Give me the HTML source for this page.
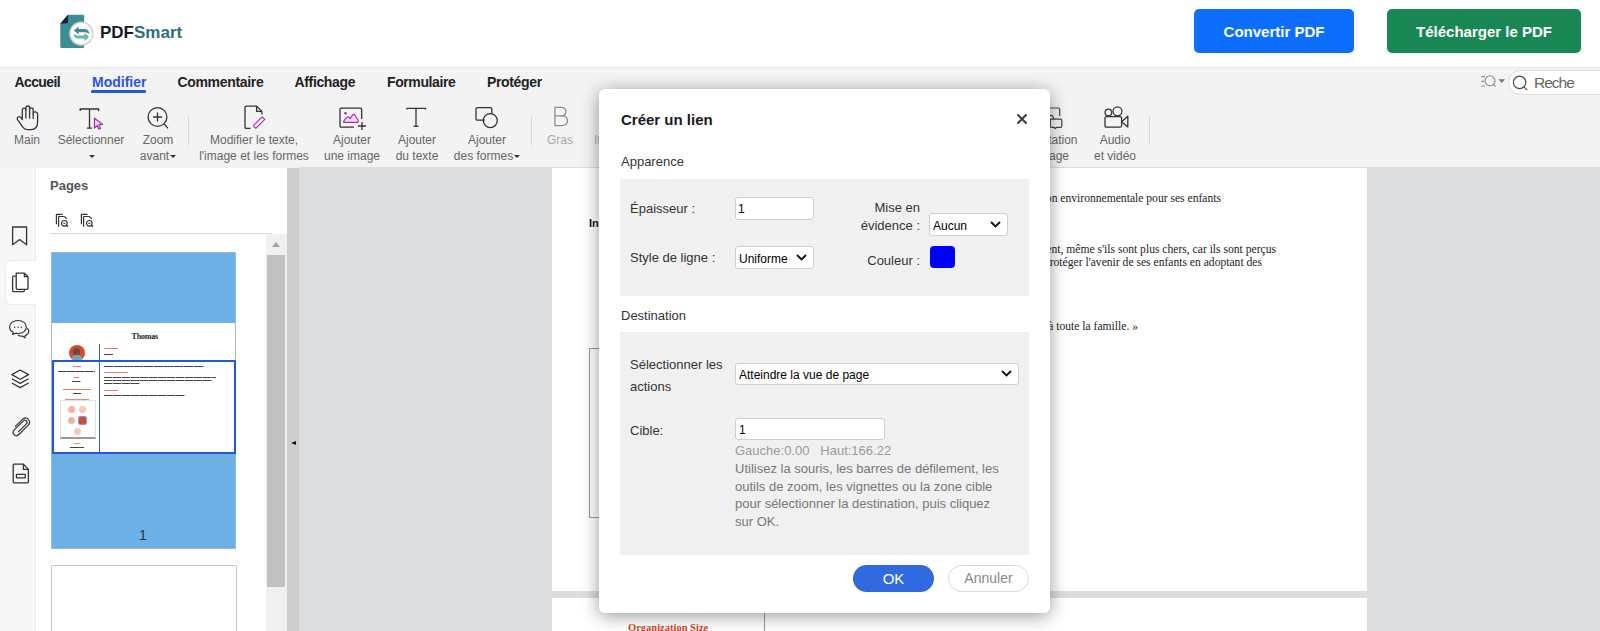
<!DOCTYPE html>
<html><head><meta charset="utf-8">
<style>
*{margin:0;padding:0;box-sizing:border-box}
html,body{width:1600px;height:631px;overflow:hidden;background:#fff;font-family:"Liberation Sans",sans-serif}
.a{position:absolute}
.t{position:absolute;white-space:nowrap;line-height:1}
#hdr{left:0;top:0;width:1600px;height:68px;background:#fff;border-bottom:1px solid #e6e6e6}
.btn{position:absolute;top:9px;height:44px;border-radius:5px;color:#fff;font-weight:bold;font-size:15px;text-align:center;line-height:45.5px}
#tb{left:0;top:68px;width:1600px;height:100px;background:#f3f3f3}
.tab{position:absolute;top:73.5px;font-weight:bold;font-size:14px;color:#222;line-height:16px}
.lbl{position:absolute;font-size:12px;color:#666;text-align:center;line-height:15.5px;white-space:nowrap}
.sep{position:absolute;top:116px;width:1px;height:29px;background:#d6d6d6}
.caret{display:inline-block;width:0;height:0;border-left:3px solid transparent;border-right:3px solid transparent;border-top:3px solid #333;vertical-align:middle;margin-left:1px}
#rail{left:0;top:168px;width:36px;height:463px;background:#f7f7f7}
#panel{left:36px;top:168px;width:251px;height:463px;background:#fff}
#split{left:287px;top:168px;width:12px;height:463px;background:#cdcdcd}
#work{left:299px;top:167px;width:1301px;height:464px;background:#dcdddf}
.page{position:absolute;background:#fff}
.serif{font-family:"Liberation Serif",serif}
#modal{left:599px;top:89px;width:451px;height:524px;background:#fff;border-radius:6px;box-shadow:0 3px 18px rgba(0,0,0,.4)}
.sec{position:absolute;background:#f0f0f0}
.ml{position:absolute;font-size:13px;color:#333;white-space:nowrap;line-height:1}
.inp{position:absolute;background:#fff;border:1px solid #cfcfcf;border-radius:3px}
.chev{position:absolute}
</style></head><body>

<!-- HEADER -->
<div id="hdr" class="a">
  <svg class="a" style="left:56px;top:10px" width="42" height="44" viewBox="0 0 42 44">
    <path d="M4.3 13.4 L12 4.8 H26.7 a1.5 1.5 0 0 1 1.5 1.5 V36.6 a1.5 1.5 0 0 1 -1.5 1.5 H5.8 a1.5 1.5 0 0 1 -1.5 -1.5 Z" fill="#3b8e93"/>
    <path d="M4.3 13.4 L12 4.8 V11.6 a1.8 1.8 0 0 1 -1.8 1.8 Z" fill="#1c2433"/>
    <circle cx="25.4" cy="23.6" r="12.2" fill="#d3d3d3"/>
    <circle cx="25.4" cy="23.6" r="10.6" fill="#fff"/>
    <path d="M17.8 20.6 L22.6 16.6 V19 H29 Q33.2 19.4 33.2 24.2 Q31.6 22.2 29 22.2 H22.6 V24.6 Z" fill="#3b8e93"/>
    <path d="M33.2 27 L28.4 31 V28.6 H22 Q17.8 28.2 17.8 23.4 Q19.4 25.4 22 25.4 H28.4 V23 Z" fill="#6bb3b0"/>
  </svg>
  <div class="t" style="left:100px;top:24px;font-size:17px;font-weight:bold;color:#141a26">PDF<span style="color:#2c6f78">Smart</span></div>
  <div class="btn" style="left:1194px;width:160px;background:#0d6efd">Convertir PDF</div>
  <div class="btn" style="left:1387px;width:194px;background:#198754">Télécharger le PDF</div>
</div>

<!-- TOOLBAR -->
<div id="tb" class="a"></div>
<div class="tab" style="left:14.5px;letter-spacing:-0.62px">Accueil</div>
<div class="tab" style="left:92px;color:#2a55e0">Modifier</div>
<div class="a" style="left:91px;top:90px;width:55px;height:3px;background:#2a55e0;border-radius:1px"></div>
<div class="tab" style="left:177.5px;letter-spacing:-0.33px">Commentaire</div>
<div class="tab" style="left:294.5px;letter-spacing:-0.35px">Affichage</div>
<div class="tab" style="left:387px;letter-spacing:-0.4px">Formulaire</div>
<div class="tab" style="left:487px;letter-spacing:-0.35px">Protéger</div>

<div class="lbl" style="left:-3px;width:60px;top:133px">Main</div>
<div class="lbl" style="left:51px;width:80px;top:133px">Sélectionner<br><span class="caret"></span></div>
<div class="lbl" style="left:128px;width:60px;top:133px">Zoom<br>avant<span class="caret"></span></div>
<div class="sep" style="left:188px"></div>
<div class="lbl" style="left:194px;width:120px;top:133px">Modifier le texte,<br>l'image et les formes</div>
<div class="lbl" style="left:316px;width:72px;top:133px">Ajouter<br>une image</div>
<div class="lbl" style="left:386px;width:62px;top:133px">Ajouter<br>du texte</div>
<div class="lbl" style="left:447px;width:80px;top:133px">Ajouter<br>des formes<span class="caret"></span></div>
<div class="sep" style="left:531px"></div>
<div class="lbl" style="left:540px;width:40px;top:133px;color:#aaa">Gras</div>
<div class="lbl" style="left:594px;width:40px;top:133px;color:#aaa;text-align:left">Italique</div>
<div class="lbl" style="left:997.5px;width:80px;top:133px;text-align:right">Annotation</div><div class="lbl" style="left:989px;width:80px;top:148.5px;text-align:right">d'image</div>
<div class="lbl" style="left:1085px;width:60px;top:133px">Audio<br>et vidéo</div>
<div class="sep" style="left:1149px"></div>

<!-- search -->
<div class="a" style="left:1508px;top:70px;width:110px;height:25px;background:#fff;border:1px solid #dcdcdc;border-radius:13px"></div>
<div class="t" style="left:1534px;top:75px;font-size:15.5px;color:#666;letter-spacing:-1px">Reche</div>


<!-- toolbar icons -->
<svg class="a" style="left:16px;top:105px" width="24" height="26" viewBox="0 0 24 26" fill="none" stroke="#333" stroke-width="1.3" stroke-linejoin="round" stroke-linecap="round">
  <path d="M6.3 14 V5 Q6.3 3.1 8.1 3.1 Q9.9 3.1 9.9 5 V2.8 Q9.9 1 11.7 1 Q13.6 1 13.6 2.8 V4.6 Q13.6 2.8 15.4 2.8 Q17.2 2.8 17.2 4.6 V8.6 Q17.2 6.9 19.1 6.9 Q21.3 6.9 21.6 8.9 V17 Q21.6 24.6 15 24.6 H11.4 Q8.6 24.6 7 22.4 L1.5 14.6 Q0.7 13 2.1 12 Q3.6 11.2 4.9 12.6 L6.3 14.6"/>
  <path d="M9.9 5 V13 M13.6 4.6 V13 M17.2 8.6 V13.6"/>
</svg>
<svg class="a" style="left:79px;top:107px" width="26" height="24" viewBox="0 0 26 24" fill="none" stroke="#333" stroke-width="1.3">
  <path d="M1.2 4 V2 H19.6 V4 M10.5 2 V21.2 M8 21.2 H13"/>
  <path d="M15.5 11.2 L23.4 17.3 L19.7 17.9 L21.5 21.4 L19.9 22.2 L18.1 18.7 L15.5 21 Z" fill="#f6d8f8" stroke="#a02fb0" stroke-width="1.2" stroke-linejoin="round"/>
</svg>
<svg class="a" style="left:145px;top:105px" width="26" height="26" viewBox="0 0 26 26" fill="none" stroke="#333" stroke-width="1.3">
  <circle cx="12.5" cy="12" r="9.4"/>
  <path d="M8 12 H17 M12.5 7.6 V16.4 M19.2 18.8 L23 23.4"/>
</svg>
<svg class="a" style="left:243px;top:105px" width="24" height="25" viewBox="0 0 24 25" fill="none" stroke="#333" stroke-width="1.3" stroke-linejoin="round">
  <path d="M7.5 23.3 H3.5 Q2 23.3 2 21.8 V2.6 Q2 1.1 3.5 1.1 H13.6 L18.9 6.4 V9.6"/>
  <path d="M13.6 1.1 V6.4 H18.9"/>
  <path d="M10.4 22.6 L19.2 13.8 L21.8 16.4 L13 25.2 Q11.2 24.6 10.4 22.6 Z" stroke="#a02fb0" stroke-width="1.2" transform="translate(0,-2)"/>
</svg>
<svg class="a" style="left:338px;top:106px" width="30" height="25" viewBox="0 0 30 25" fill="none" stroke="#333" stroke-width="1.3" stroke-linejoin="round">
  <path d="M16 21.2 H3.5 Q2 21.2 2 19.7 V3.6 Q2 2.1 3.5 2.1 H22.2 Q23.7 2.1 23.7 3.6 V13"/>
  <path d="M24 16 V24 M20 20 H28"/>
  <path d="M5.6 15.6 Q6 14.4 7 13.3 L9 11.3 Q10 10.4 11 11.4 L12.2 12.6 L14.5 9 Q15.6 7.6 16.8 9 L20 14 Q20.8 16.4 19 16.4 H6.8 Q5.3 16.4 5.6 15.6 Z" fill="#f6d8f8" stroke="#a02fb0" stroke-width="1.2"/>
  <circle cx="7.5" cy="7.3" r="1.3" fill="#a02fb0" stroke="none"/>
</svg>
<svg class="a" style="left:405px;top:106px" width="22" height="23" viewBox="0 0 22 23" fill="none" stroke="#333" stroke-width="1.3">
  <path d="M2 3.5 V2.3 H20.6 V3.5 M11 2.3 V20.4 M8.5 20.4 H13.5"/>
</svg>
<svg class="a" style="left:474px;top:106px" width="26" height="24" viewBox="0 0 26 24" fill="none" stroke="#333" stroke-width="1.3">
  <path d="M10.8 14.2 H3.5 Q2 14.2 2 12.7 V3.1 Q2 1.6 3.5 1.6 H16.3 Q17.8 1.6 17.8 3.1 V7.4"/>
  <circle cx="16.3" cy="14.6" r="7"/>
</svg>
<svg class="a" style="left:552px;top:106px" width="18" height="22" viewBox="0 0 18 22" fill="none" stroke="#8c8c8c" stroke-width="1.3">
  <path d="M2.9 1.4 H9 Q13.9 1.4 13.9 5.4 Q13.9 9.8 9 9.8 H2.9 Z M2.9 9.8 H10 Q15.5 9.8 15.5 14.8 Q15.5 19.6 9.5 19.6 H2.9 Z"/>
</svg>
<svg class="a" style="left:1048px;top:106px" width="16" height="24" viewBox="0 0 16 24" fill="none" stroke="#444" stroke-width="1.2" stroke-linejoin="round">
  <path d="M-4 2 H10.2 Q11.7 2 11.7 3.5 V10"/>
  <path d="M2.3 13.2 H12.5 Q13.8 13.2 13.8 14.5 V20 Q13.8 21.3 12.5 21.3 H8.7 L7 22.7 L6.4 21.3 H3.6 Q2.3 21.3 2.3 20 Z"/>
  <path d="M2 9.6 Q5 8.6 5.6 12.9"/>
</svg>
<svg class="a" style="left:1102px;top:104px" width="28" height="25" viewBox="0 0 28 25" fill="none" stroke="#333" stroke-width="1.3" stroke-linejoin="round">
  <circle cx="6.4" cy="8.5" r="3.3"/>
  <circle cx="15.5" cy="7.3" r="4.5"/>
  <path d="M4.5 12.6 H18.1 Q19.6 12.6 19.6 14.1 V21.7 Q19.6 23.2 18.1 23.2 H4.5 Q3 23.2 3 21.7 V14.1 Q3 12.6 4.5 12.6 Z"/>
  <path d="M19.6 17.8 L25.8 12.3 V23 Z"/>
</svg>
<!-- search tool icon -->
<svg class="a" style="left:1480px;top:74px" width="28" height="16" viewBox="0 0 28 16" fill="none" stroke="#8a8a8a" stroke-width="1.1">
  <path d="M1.2 2.6 H5 M1.2 7.3 H4 M1.2 12 H5" stroke-width="1.2"/>
  <circle cx="10" cy="6.8" r="5"/>
  <path d="M13.6 10.4 L15.8 12.6"/>
  <path d="M18.5 5.2 H25 L21.75 9 Z" fill="#777" stroke="none"/>
</svg>
<svg class="a" style="left:1511px;top:75px" width="18" height="17" viewBox="0 0 18 17" fill="none" stroke="#4a4a4a" stroke-width="1.2">
  <circle cx="8.6" cy="7.4" r="6.2"/>
  <path d="M13 11.8 L16.3 15.1"/>
</svg>
<!-- LEFT RAIL / PANEL -->
<div id="rail" class="a"></div>
<div class="a" style="left:35px;top:168px;width:1px;height:463px;background:#ececec"></div>
<div class="a" style="left:5px;top:260px;width:32px;height:45px;background:#fff;border:1px solid #ececec;border-right:none;border-radius:6px 0 0 6px"></div>
<div id="panel" class="a"></div>
<div class="t" style="left:50px;top:179px;font-size:13px;font-weight:bold;color:#555">Pages</div>
<div class="a" style="left:50px;top:233px;width:222px;height:1px;background:#d9d9d9"></div>
<!-- scrollbar -->
<div class="a" style="left:266px;top:234px;width:21px;height:397px;background:#f0f0f0"></div>
<div class="a" style="left:267px;top:255px;width:18px;height:332px;background:#c1c1c1"></div>
<div class="a" style="left:271.5px;top:242px;width:0;height:0;border-left:4.5px solid transparent;border-right:4.5px solid transparent;border-bottom:5px solid #a3a3a3"></div>

<!-- thumbnail -->
<div class="a" style="left:51px;top:252px;width:185px;height:297px;background:#6cb0e6;border:1px solid #9fb8cc"></div>
<div class="a" style="left:52px;top:323px;width:183px;height:131px;background:#fff"></div>
<div class="t serif" style="left:131.5px;top:332.5px;font-size:8px;font-weight:bold;color:#222;letter-spacing:-0.2px">Thomas</div>
<div class="a" style="left:68.5px;top:345px;width:16px;height:16px;border-radius:50%;background:#d24a2a;overflow:hidden"><div class="a" style="left:4.5px;top:3px;width:7px;height:8px;border-radius:45%;background:#6a4a3a"></div><div class="a" style="left:3px;top:10px;width:10px;height:8px;border-radius:40%;background:#7aa0b8"></div></div>
<div class="a" style="left:99px;top:344px;width:1px;height:108px;background:#3f5f8f"></div>
<div class="a" style="left:103.5px;top:348px;width:14px;height:1.2px;background:#e87a60"></div>
<div class="a" style="left:103.5px;top:353.5px;width:9px;height:1.4px;background:#444"></div>
<div class="a" style="left:103.5px;top:365.5px;width:100px;height:1.3px;background:repeating-linear-gradient(90deg,#444 0 9px,#aaa 9px 10px)"></div>
<div class="a" style="left:103.5px;top:372px;width:24px;height:1.2px;background:#e87a60"></div>
<div class="a" style="left:103.5px;top:377px;width:112px;height:1.3px;background:repeating-linear-gradient(90deg,#444 0 8px,#aaa 8px 9px)"></div>
<div class="a" style="left:103.5px;top:379.8px;width:108px;height:1.3px;background:repeating-linear-gradient(90deg,#444 0 8px,#aaa 8px 9px)"></div>
<div class="a" style="left:103.5px;top:382.6px;width:36px;height:1.3px;background:repeating-linear-gradient(90deg,#444 0 8px,#aaa 8px 9px)"></div>
<div class="a" style="left:103.5px;top:389.5px;width:14px;height:1.2px;background:#e87a60"></div>
<div class="a" style="left:103.5px;top:394.5px;width:81px;height:1.3px;background:repeating-linear-gradient(90deg,#444 0 8px,#aaa 8px 9px)"></div>
<div class="a" style="left:73px;top:366px;width:8px;height:1.1px;background:#e87a60"></div>
<div class="a" style="left:58px;top:371px;width:37px;height:1.3px;background:repeating-linear-gradient(90deg,#444 0 8px,#aaa 8px 9px)"></div>
<div class="a" style="left:74px;top:376.5px;width:5px;height:1.1px;background:#e87a60"></div>
<div class="a" style="left:72px;top:381px;width:9px;height:1.3px;background:repeating-linear-gradient(90deg,#444 0 8px,#aaa 8px 9px)"></div>
<div class="a" style="left:63px;top:388.5px;width:28px;height:1.1px;background:#e87a60"></div>
<div class="a" style="left:73px;top:393px;width:8px;height:1.3px;background:repeating-linear-gradient(90deg,#444 0 8px,#aaa 8px 9px)"></div>
<div class="a" style="left:65px;top:399px;width:24px;height:1.4px;background:#e88a70"></div>
<div class="a" style="left:59.5px;top:400px;width:36px;height:39px;background:#fff;border:1px solid #e0e0e0;border-bottom:2px solid #999"></div>
<div class="a" style="left:68px;top:406px;width:7px;height:7px;border-radius:50%;background:#f2b4a2"></div>
<div class="a" style="left:78.5px;top:406px;width:7px;height:7px;border-radius:50%;background:#f6c8ba"></div>
<div class="a" style="left:68px;top:417px;width:7px;height:7px;border-radius:50%;background:#f2b4a2"></div>
<div class="a" style="left:78.5px;top:417px;width:7px;height:7px;border-radius:1px;background:#c8503a;outline:1px solid #9a8ae0"></div>
<div class="a" style="left:73.5px;top:427.5px;width:7px;height:7px;border-radius:50%;background:#f6c8ba"></div>
<div class="a" style="left:74px;top:442.5px;width:6px;height:1.4px;background:#e8a040"></div>
<div class="a" style="left:70px;top:447px;width:14px;height:1.3px;background:#444"></div>
<div class="a" style="left:51.5px;top:360px;width:184px;height:94px;border:2.5px solid #2158d8"></div>
<div class="t" style="left:139px;top:528px;font-size:14px;color:#333">1</div>
<div class="a" style="left:51px;top:565px;width:186px;height:70px;background:#fff;border:1px solid #c8c8c8"></div>


<!-- rail icons -->
<svg class="a" style="left:10px;top:225px" width="20" height="22" viewBox="0 0 20 22" fill="none" stroke="#333" stroke-width="1.3" stroke-linejoin="round">
  <path d="M2.6 2 H16.6 V19.8 L9.6 14.6 L2.6 19.8 Z"/>
</svg>
<svg class="a" style="left:10px;top:271px" width="20" height="22" viewBox="0 0 20 22" fill="none" stroke="#333" stroke-width="1.3" stroke-linejoin="round">
  <path d="M5.8 5.2 H3.6 Q2.6 5.2 2.6 6.2 V19.6 Q2.6 20.6 3.6 20.6 H13.4 Q14.4 20.6 14.4 19.6 V18.3"/>
  <path d="M6.2 2.1 H14.4 L18 5.7 V17.3 Q18 18.3 17 18.3 H7.2 Q6.2 18.3 6.2 17.3 Z"/>
  <path d="M14.4 2.1 V5.7 H18"/>
</svg>
<svg class="a" style="left:8px;top:319px" width="22" height="21" viewBox="0 0 22 21" fill="none" stroke="#333" stroke-width="1.2" stroke-linejoin="round">
  <path d="M10 1.5 C5 1.5 1.6 4.3 1.6 8 C1.6 10.3 3 12.2 5.2 13.3 L4.6 15.4 L7.8 14.2 C8.5 14.4 9.2 14.5 10 14.5 C15 14.5 18.3 11.7 18.3 8 C18.3 4.3 15 1.5 10 1.5 Z"/>
  <path d="M19.2 9.2 C20.2 10 20.8 11 20.8 12.3 C20.8 14.2 19.4 15.7 17.2 16.6 L17 18.8 L14.8 17.2 C12.9 17.4 11.1 17 9.8 16.1"/>
  <circle cx="6.6" cy="8.2" r="0.75" fill="#333" stroke="none"/>
  <circle cx="10" cy="8.2" r="0.75" fill="#333" stroke="none"/>
  <circle cx="13.4" cy="8.2" r="0.75" fill="#333" stroke="none"/>
</svg>
<svg class="a" style="left:9px;top:368px" width="22" height="22" viewBox="0 0 22 22" fill="none" stroke="#333" stroke-width="1.2" stroke-linejoin="round">
  <path d="M11.2 2 L19.6 6.6 L11.2 11.2 L2.8 6.6 Z"/>
  <path d="M2.8 10.8 L11.2 15.4 L19.6 10.8"/>
  <path d="M2.8 15 L11.2 19.6 L19.6 15"/>
</svg>
<svg class="a" style="left:10px;top:415px" width="22" height="22" viewBox="0 0 22 22" fill="none" stroke="#333" stroke-width="1.2" stroke-linejoin="round" stroke-linecap="round">
  <path d="M8.6 16.6 L16.4 8.8 Q17.9 7.3 16.4 5.8 Q14.9 4.3 13.4 5.8 L4.3 14.9 Q1.8 17.4 4.1 19.7 Q6.4 22 8.9 19.5 L18 10.4 Q21.2 7.2 18.3 4.3 Q15.4 1.4 12.2 4.6 L5.5 11.3"/>
</svg>
<svg class="a" style="left:11px;top:462px" width="20" height="23" viewBox="0 0 20 23" fill="none" stroke="#333" stroke-width="1.3" stroke-linejoin="round">
  <path d="M3.2 2.2 H12.4 L17.4 7.4 V19.8 Q17.4 20.8 16.4 20.8 H3.2 Q2.2 20.8 2.2 19.8 V3.2 Q2.2 2.2 3.2 2.2 Z"/>
  <path d="M12.4 2.2 V7.4 H17.4"/>
  <rect x="5.4" y="12.4" width="8.9" height="3.4" rx="0.6"/>
</svg>
<!-- pages panel icons -->
<svg class="a" style="left:54px;top:212px" width="16" height="17" viewBox="0 0 16 17" fill="none" stroke="#333" stroke-width="1.2">
  <path d="M8.6 2.4 H3 Q2.4 2.4 2.4 3 V12.3"/>
  <path d="M10.4 4.5 H5.2 Q4.6 4.5 4.6 5.1 V14.7"/>
  <path d="M10.4 4.5 L12.8 6.9"/>
  <circle cx="10.3" cy="11.3" r="2.8"/>
  <path d="M12.3 13.3 L13.8 14.8" stroke-width="1.6"/>
  <path d="M9.2 11.3 H11.4" stroke-width="1"/>
</svg>
<svg class="a" style="left:79px;top:212px" width="16" height="17" viewBox="0 0 16 17" fill="none" stroke="#333" stroke-width="1.2">
  <path d="M8.6 2.4 H3 Q2.4 2.4 2.4 3 V12.3"/>
  <path d="M10.4 4.5 H5.2 Q4.6 4.5 4.6 5.1 V14.7"/>
  <path d="M10.4 4.5 L12.8 6.9"/>
  <circle cx="10.3" cy="11.3" r="2.8"/>
  <path d="M12.3 13.3 L13.8 14.8" stroke-width="1.6"/>
  <path d="M9.2 11.3 H11.4" stroke-width="1"/>
</svg>
<div id="split" class="a"></div>
<div class="a" style="left:291px;top:441px;width:0;height:0;border-top:2.6px solid transparent;border-bottom:2.6px solid transparent;border-right:5px solid #151515"></div>
<div id="work" class="a"></div>

<!-- PAGES -->
<div class="page" style="left:552px;top:168px;width:815px;height:423px"></div>
<div class="page" style="left:552px;top:598px;width:815px;height:40px"></div>


<!-- page 1 content (visible portions) -->
<div class="t" style="left:589px;top:218px;font-size:11px;font-weight:bold;color:#111">Introduction</div>
<div class="a" style="left:589px;top:348px;width:300px;height:170px;border:1px solid #9a9a9a"></div>
<div class="t serif" style="right:379px;top:192.5px;font-size:11.6px;color:#222">Sensibilisation environnementale pour ses enfants</div>
<div class="t serif" style="right:324px;top:243.5px;font-size:11.6px;color:#222">produits respectueux de l'environnement, même s'ils sont plus chers, car ils sont perçus</div>
<div class="t serif" style="right:338px;top:256.5px;font-size:11.6px;color:#222">comme un moyen de protéger l'avenir de ses enfants en adoptant des</div>
<div class="t serif" style="right:462px;top:320.5px;font-size:11.6px;color:#222">offrir le meilleur à toute la famille. »</div>
<!-- page 2 content -->
<div class="t serif" style="left:628px;top:622.5px;font-size:10.5px;font-weight:bold;color:#d04a28">Organization Size</div>
<div class="a" style="left:764px;top:598px;width:1px;height:40px;background:#8a9ab0"></div>
<!-- MODAL -->
<div id="modal" class="a"></div>
<div class="t" style="left:621px;top:112.4px;font-size:15px;font-weight:bold;color:#1a1a1a">Créer un lien</div>
<svg class="a" style="left:1016px;top:113px" width="12" height="12" viewBox="0 0 12 12"><path d="M2 2 L10 10 M10 2 L2 10" stroke="#3a3a3a" stroke-width="2" stroke-linecap="round"/></svg>
<div class="ml" style="left:621px;top:155.4px">Apparence</div>
<div class="sec" style="left:620px;top:179px;width:409px;height:117px"></div>
<div class="ml" style="left:630px;top:202px">Épaisseur :</div>
<div class="inp" style="left:735px;top:197px;width:79px;height:23px"></div>
<div class="t" style="left:738px;top:203px;font-size:12px;color:#000">1</div>
<div class="ml" style="left:630px;top:251px">Style de ligne :</div>
<div class="inp" style="left:735px;top:246px;width:79px;height:23px"></div>
<div class="t" style="left:739px;top:253px;font-size:12px;color:#000">Uniforme</div>
<svg class="chev" style="left:796px;top:254px" width="11" height="7" viewBox="0 0 11 7"><path d="M1 1 L5.5 5.5 L10 1" stroke="#111" stroke-width="1.8" fill="none"/></svg>
<div class="ml" style="left:820px;top:198.5px;width:100px;text-align:right;line-height:18px">Mise en<br>évidence :</div>
<div class="inp" style="left:929px;top:213px;width:79px;height:23px"></div>
<div class="t" style="left:933px;top:220px;font-size:12px;color:#000">Aucun</div>
<svg class="chev" style="left:990px;top:221px" width="11" height="7" viewBox="0 0 11 7"><path d="M1 1 L5.5 5.5 L10 1" stroke="#111" stroke-width="1.8" fill="none"/></svg>
<div class="ml" style="left:820px;top:254px;width:100px;text-align:right">Couleur :</div>
<div class="a" style="left:930px;top:246px;width:25px;height:22px;background:#0000ff;border-radius:4px"></div>

<div class="ml" style="left:621px;top:309px">Destination</div>
<div class="sec" style="left:620px;top:332px;width:409px;height:223px"></div>
<div class="ml" style="left:630px;top:354px;line-height:22px">Sélectionner les<br>actions</div>
<div class="inp" style="left:735px;top:363px;width:284px;height:22px"></div>
<div class="t" style="left:739px;top:369px;font-size:12px;color:#000">Atteindre la vue de page</div>
<svg class="chev" style="left:1001px;top:370px" width="11" height="7" viewBox="0 0 11 7"><path d="M1 1 L5.5 5.5 L10 1" stroke="#111" stroke-width="1.8" fill="none"/></svg>
<div class="ml" style="left:630px;top:424px">Cible:</div>
<div class="inp" style="left:735px;top:418px;width:150px;height:22px"></div>
<div class="t" style="left:739px;top:424px;font-size:12px;color:#000">1</div>
<div class="ml" style="left:735px;top:444px;color:#9a9a9a">Gauche:0.00&nbsp;&nbsp;&nbsp;Haut:166.22</div>
<div class="ml" style="left:735px;top:460px;color:#777;line-height:17.5px">Utilisez la souris, les barres de défilement, les<br>outils de zoom, les vignettes ou la zone cible<br>pour sélectionner la destination, puis cliquez<br>sur OK.</div>

<div class="a" style="left:853px;top:565px;width:81px;height:27px;background:#2f6ae0;border-radius:14px;color:#fff;font-size:15px;text-align:center;line-height:27px">OK</div>
<div class="a" style="left:948px;top:565px;width:81px;height:27px;background:#fff;border:1px solid #dadada;border-radius:14px;color:#888;font-size:14px;text-align:center;line-height:25px">Annuler</div>

</body></html>
